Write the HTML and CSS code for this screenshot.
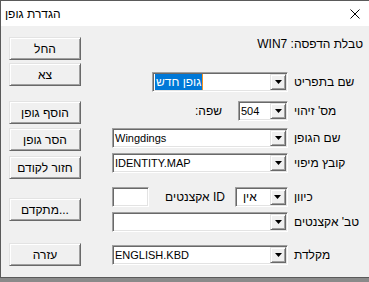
FILE: index.html
```html
<!DOCTYPE html>
<html lang="he">
  <head>
    <meta charset="UTF-8" />
    <meta name="viewport" content="width=device-width, initial-scale=1.0" />
    <title>הגדרת גופן</title>
    <link rel="stylesheet" href="styles.css">
  </head>
  <body>
    <div class="window">
      <div class="title-bar">
        <span class="title" dir="rtl">הגדרת גופן</span>
        <svg class="close" width="10" height="10" viewBox="0 0 10 10">
          <path d="M0.5 0.5L9.5 9.5M9.5 0.5L0.5 9.5" stroke="#000" stroke-width="1" />
        </svg>
      </div>
      <div class="dialog">
        <div class="buttons">
          <button class="btn btn-apply">החל</button>
          <button class="btn btn-exit">צא</button>
          <button class="btn btn-add">הוסף גופן</button>
          <button class="btn btn-remove">הסר גופן</button>
          <button class="btn btn-revert">חזור לקודם</button>
          <button class="btn btn-advanced"><span>מתקדם</span><span>...</span></button>
          <button class="btn btn-help">עזרה</button>
        </div>

        <div class="fields">
          <div class="row row-table">
            <span class="heb" dir="rtl">טבלת הדפסה: WIN7</span>
          </div>

          <div class="row row-menu">
            <div class="field">
              <div class="combo combo-menu">
                <span class="value">
                  <span class="selected" dir="rtl">גופן חדש</span><span class="caret"></span>
                </span>
                <span class="drop"><svg width="7" height="4" viewBox="0 0 7 4"><path d="M0 0H7L3.5 4Z" /></svg></span>
              </div>
            </div>
            <label class="label" dir="rtl">שם בתפריט</label>
          </div>

          <div class="row row-id">
            <div class="field">
              <span class="heb lang" dir="rtl">שפה:</span>
              <div class="combo combo-id">
                <span class="value">504</span>
                <span class="drop"><svg width="7" height="4" viewBox="0 0 7 4"><path d="M0 0H7L3.5 4Z" /></svg></span>
              </div>
            </div>
            <label class="label" dir="rtl">מס' זיהוי</label>
          </div>

          <div class="row row-font">
            <div class="field">
              <div class="combo combo-wide">
                <span class="value">Wingdings</span>
                <span class="drop"><svg width="7" height="4" viewBox="0 0 7 4"><path d="M0 0H7L3.5 4Z" /></svg></span>
              </div>
            </div>
            <label class="label" dir="rtl">שם הגופן</label>
          </div>

          <div class="row row-map">
            <div class="field">
              <div class="combo combo-wide">
                <span class="value">IDENTITY.MAP</span>
                <span class="drop"><svg width="7" height="4" viewBox="0 0 7 4"><path d="M0 0H7L3.5 4Z" /></svg></span>
              </div>
            </div>
            <label class="label" dir="rtl">קובץ מיפוי</label>
          </div>

          <div class="row row-dir">
            <div class="field">
              <div class="textbox"></div>
              <span class="heb accents-id" dir="rtl">ID אקצנטים</span>
              <div class="combo combo-dir">
                <span class="value value-heb">אין</span>
                <span class="drop"><svg width="7" height="4" viewBox="0 0 7 4"><path d="M0 0H7L3.5 4Z" /></svg></span>
              </div>
            </div>
            <label class="label" dir="rtl">כיוון</label>
          </div>

          <div class="row row-accents">
            <div class="field">
              <div class="combo combo-wide">
                <span class="value"></span>
                <span class="drop"><svg width="7" height="4" viewBox="0 0 7 4"><path d="M0 0H7L3.5 4Z" /></svg></span>
              </div>
            </div>
            <label class="label" dir="rtl">טב' אקצנטים</label>
          </div>

          <div class="row row-keyboard">
            <div class="field">
              <div class="combo combo-wide">
                <span class="value">ENGLISH.KBD</span>
                <span class="drop"><svg width="7" height="4" viewBox="0 0 7 4"><path d="M0 0H7L3.5 4Z" /></svg></span>
              </div>
            </div>
            <label class="label" dir="rtl">מקלדת</label>
          </div>
        </div>
      </div>
    </div>
  </body>
</html>
```

FILE: styles.css
```css
* {
  box-sizing: border-box;
}
html {
  background: #8a8a8a;
}
body {
  margin: 0;
  font-family: "Liberation Sans", Arial, sans-serif;
  font-size: 12px;
  color: #000;
}

/* window frame */
.window {
  width: 369px;
  height: 278px;
  background: #f0f0f0;
  border: 1px solid #5a5a5a;
  border-right: none;
}
.title-bar {
  height: 25px;
  background: #fff;
  display: flex;
  align-items: center;
  justify-content: space-between;
  padding: 0 9px 0 4px;
}
.title {
  font-size: 12px;
}

.dialog {
  display: flex;
  height: 251px;
}

/* left column of push buttons */
.buttons {
  display: flex;
  flex-direction: column;
  width: 72px;
  margin-left: 8px;
}
.btn {
  height: 23px;
  padding: 0;
  font-family: "Liberation Sans", Arial, sans-serif;
  font-size: 12px;
  color: #000;
  background: #f0f0f0;
  border: 1px solid;
  border-color: #e3e3e3 #696969 #696969 #e3e3e3;
  box-shadow: inset 1px 1px #fff, inset -1px -1px #a0a0a0;
}
.btn-apply { margin-top: 11px; }
.btn-exit { margin-top: 3px; }
.btn-add { margin-top: 15px; }
.btn-remove { margin-top: 4px; }
.btn-revert { margin-top: 5px; }
.btn-advanced {
  margin-top: 19px;
  display: flex;
  align-items: center;
  justify-content: center;
  direction: ltr;
}
.btn-help { margin-top: 22px; }

/* right side form */
.fields {
  display: flex;
  flex-direction: column;
  width: 282px;
}
.row {
  display: flex;
  align-items: center;
  height: 20px;
  margin-left: 31px;
}
.row-table {
  justify-content: flex-end;
  margin-top: 8px;
}
.row-menu { margin-top: 18px; }
.row-id { margin-top: 9px; }
.row-font { margin-top: 7px; }
.row-map { margin-top: 5px; }
.row-dir { margin-top: 14px; }
.row-accents { margin-top: 5px; }
.row-keyboard { margin-top: 13px; }

.field {
  display: flex;
  align-items: center;
  justify-content: flex-end;
  width: 174px;
  height: 20px;
}
.label {
  margin-left: 8px;
  text-align: left;
  flex: 1;
}

/* sunken combo boxes */
.combo {
  display: flex;
  height: 20px;
  padding: 1px;
  background: #fff;
  border: 1px solid;
  border-color: #a0a0a0 #fff #fff #a0a0a0;
  box-shadow: inset 1px 1px #696969, inset -1px -1px #e3e3e3;
}
.combo-wide {
  width: 176px;
  margin-right: -2px;
}
.combo-menu {
  width: 136px;
  margin-right: -2px;
}
.combo-id {
  width: 50px;
  margin-left: 16px;
  margin-right: -2px;
}
.combo-dir {
  width: 53px;
  margin-left: auto;
  margin-right: -2px;
}
.value {
  flex: 1;
  display: flex;
  align-items: center;
  padding-left: 1px;
  font-size: 11px;
  line-height: 16px;
  white-space: nowrap;
  overflow: hidden;
}
.value-heb {
  font-size: 12px;
  padding-left: 6px;
}
.selected {
  display: inline-block;
  height: 16px;
  line-height: 16px;
  padding: 0 1px;
  font-size: 12px;
  color: #fff;
  background: #0078d7;
}
.caret {
  display: inline-block;
  width: 1px;
  height: 16px;
  background: #f7931e;
}
.drop {
  display: flex;
  align-items: center;
  justify-content: center;
  width: 16px;
  height: 16px;
  background: #f0f0f0;
  border: 1px solid;
  border-color: #e3e3e3 #696969 #696969 #e3e3e3;
  box-shadow: inset 1px 1px #fff, inset -1px -1px #a0a0a0;
}
.drop svg {
  fill: #000;
}

.textbox {
  width: 37px;
  height: 20px;
  margin-right: auto;
  background: #fff;
  border: 1px solid;
  border-color: #a0a0a0 #fff #fff #a0a0a0;
  box-shadow: inset 1px 1px #696969, inset -1px -1px #e3e3e3;
}
.accents-id {
  margin-left: 6px;
}
```
